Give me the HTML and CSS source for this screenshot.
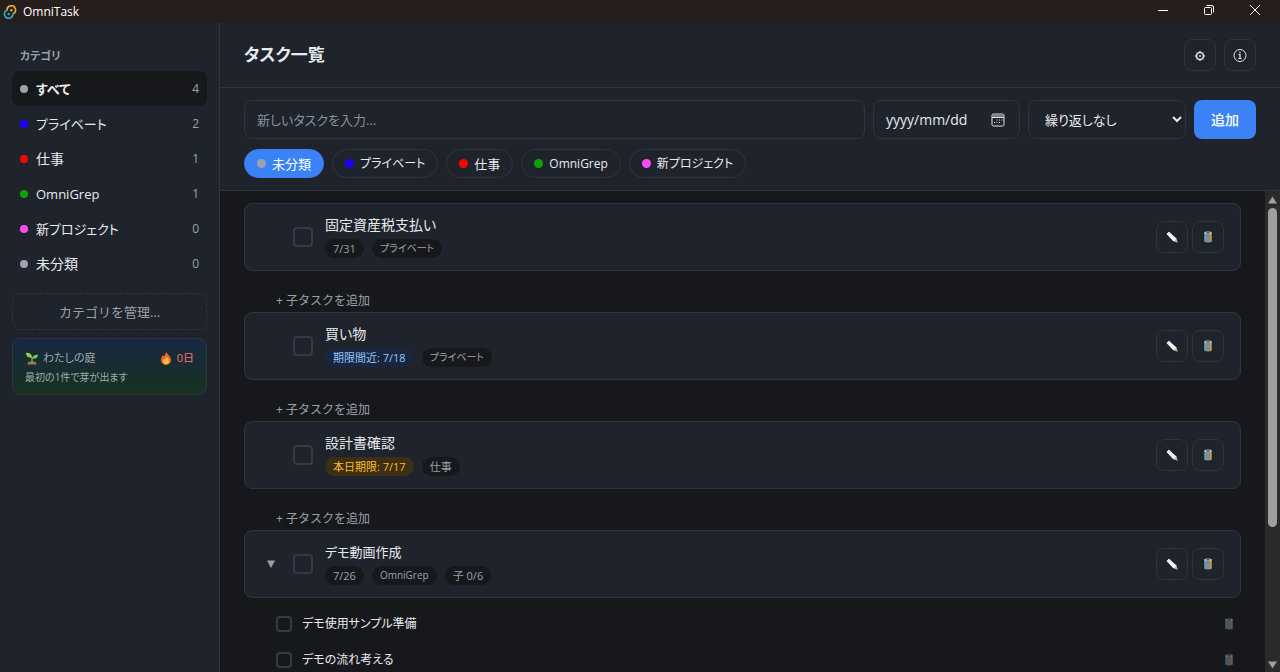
FILE: index.html
```html
<!DOCTYPE html>
<html lang="ja">

<head>
    <meta charset="UTF-8">
    <meta name="viewport" content="width=device-width, initial-scale=1.0">
    <title>OmniTask</title>
    <link rel="stylesheet" href="styles.css">
</head>

<body>
    <!-- shared icons -->
    <svg class="sprite" aria-hidden="true">
        <symbol id="pencil" viewBox="0 0 12 12">
            <path d="M.6 3 3 .8l7.200 6.400 1.400 4.200-4.600-1.300z" fill="#f1f1f3" />
            <path d="M.6 3 3 .8l1.300 1.200-2.300 2.300z" fill="#d9e9f7" />
            <path d="M9.900 8.300l1.700 3.100-3.400-1z" fill="#d9a577" />
        </symbol>
        <symbol id="trash" viewBox="0 0 12 12">
            <path d="M2.500 1.500h7v9.200q-3.500 1.400-7 0z" fill="#9d97a6" />
            <path d="M2.500 2h1.500v9l-1.500-.4z" fill="#3fb3b5" />
            <path d="M8 2h1.500v8.600L8 11z" fill="#b3ad2e" />
            <path d="M5 3v8M7 3v8" stroke="#77717f" stroke-width=".8" />
            <ellipse cx="6" cy="1.700" rx="3.700" ry="1.300" fill="#c9c9cd" />
            <ellipse cx="6" cy="1.800" rx="2.200" ry=".6" fill="#2b2d33" />
        </symbol>
    </svg>

    <div class="titleBar">
        <svg class="logo" viewBox="0 0 14 14" fill="none" stroke-width="1.600">
            <path d="M4.200 5.600A4.200 4.200 0 1 1 10.200 8.700" stroke="#e6ac35" />
            <path d="M9.800 8.500A4.200 4.200 0 1 1 3.800 5.300" stroke="#26b3c4" />
            <circle cx="8.300" cy="5.200" r="1.200" fill="#e6ac35" />
            <circle cx="5.700" cy="9" r="1.200" fill="#26b3c4" />
        </svg>
        <span>OmniTask</span>
        <div class="windowButtons">
            <button aria-label="最小化"><svg viewBox="0 0 12 12"><path d="M1 6.500h10" /></svg></button>
            <button aria-label="元に戻す"><svg viewBox="0 0 12 12"><rect x="1.500" y="3.500" width="7" height="7" rx="1" /><path d="M3.500 1.500H9a1.500 1.500 0 0 1 1.500 1.500v5.500" /></svg></button>
            <button aria-label="閉じる"><svg viewBox="0 0 12 12"><path d="M1 1l10 10M11 1L1 11" /></svg></button>
        </div>
    </div>

    <div class="app">
        <aside class="sidebar">
            <h2>カテゴリ</h2>
            <ul class="categories">
                <li class="active kana"><i class="dot gray"></i>すべて<span class="count">4</span></li>
                <li class="kana"><i class="dot blue"></i>プライベート<span class="count">2</span></li>
                <li><i class="dot red"></i>仕事<span class="count">1</span></li>
                <li class="latin"><i class="dot green"></i>OmniGrep<span class="count">1</span></li>
                <li class="kana"><i class="dot pink"></i>新プロジェクト<span class="count">0</span></li>
                <li><i class="dot gray"></i>未分類<span class="count">0</span></li>
            </ul>
            <button class="manage">カテゴリを管理...</button>
            <div class="garden">
                <div class="gardenTop">
                    <svg viewBox="0 0 14 14">
                        <path d="M2 13.500q0-3.500 5-3.500t5 3.500z" fill="#a8705f" />
                        <path d="M6.200 11V5h1.600v6z" fill="#6aa53a" />
                        <path d="M7 6.200Q1.500 6.800.2 1 6.500.2 7 6.200z" fill="#93cf4a" />
                        <path d="M7 7Q8 2.300 13.800 3 12.500 8.300 7 7z" fill="#7cc447" />
                    </svg>
                    <span>わたしの庭</span>
                    <svg class="flame" viewBox="0 0 14 14">
                        <path d="M7.500.3C8 2.500 12.500 4.500 12.500 8.700A5.500 5.200 0 0 1 1.500 8.700C1.500 6.500 3 5.500 3.400 3.500L5 4.500Q6 2.500 7.500.3z" fill="#f0642f" />
                        <path d="M7.500 5Q10.800 7.500 10.300 10A3.300 3.300 0 0 1 3.700 10Q3.700 8.500 5.400 7.200L6 8.500z" fill="#fbbf3c" />
                    </svg>
                    <span class="streak">0日</span>
                </div>
                <p>最初の1件で芽が出ます</p>
            </div>
        </aside>

        <main class="content">
            <header class="header">
                <h1>タスク一覧</h1>
                <button class="iconButton" aria-label="設定">
                    <svg viewBox="0 0 14 14" fill="none" stroke="#e4e6eb">
                        <circle cx="7" cy="8" r="3.500" stroke-width="1.600" />
                        <circle cx="7" cy="8" r="1" fill="#e4e6eb" stroke="none" />
                        <path d="M7 2.800v2M7 11.200v2M1.800 8h2M10.200 8h2M3.500 4.500l1.200 1.200M9.300 10.300l1.200 1.200M10.500 4.500L9.300 5.700M4.700 10.300l-1.200 1.200" />
                    </svg>
                </button>
                <button class="iconButton" aria-label="情報">
                    <svg viewBox="0 0 14 14" fill="none" stroke="#e4e6eb">
                        <circle cx="7" cy="7.500" r="6" />
                        <path d="M7 3.700v1.500M5.500 6.500H7V10.500M5.400 10.500h3.200" stroke-width="1.200" />
                    </svg>
                </button>
            </header>

            <form class="addForm">
                <div class="formRow">
                    <input type="text" class="taskInput" placeholder="新しいタスクを入力..." aria-label="新しいタスク">
                    <label class="dateField">
                        <input type="text" placeholder="yyyy/mm/dd" aria-label="期限">
                        <svg viewBox="0 0 14 14" fill="none" stroke="#e4e6eb">
                            <rect x="1" y="1" width="12" height="12" rx="1.500" />
                            <path d="M1 4.500h12M5.500 7h1M8 7h1M10.500 7h1M3 9.500h1M5.500 9.500h1M8 9.500h1" />
                            <path d="M1 2.800h12" stroke="#858992" stroke-width="2" />
                        </svg>
                    </label>
                    <select aria-label="繰り返し">
                        <option>繰り返しなし</option>
                        <option>毎日</option>
                        <option>毎週</option>
                        <option>毎月</option>
                    </select>
                    <button type="button" class="addButton">追加</button>
                </div>
                <div class="chips">
                    <button type="button" class="chip selected"><i class="dot gray"></i>未分類</button>
                    <button type="button" class="chip kana"><i class="dot blue"></i>プライベート</button>
                    <button type="button" class="chip"><i class="dot red"></i>仕事</button>
                    <button type="button" class="chip latin"><i class="dot green"></i>OmniGrep</button>
                    <button type="button" class="chip kana"><i class="dot pink"></i>新プロジェクト</button>
                </div>
            </form>

            <div class="listArea">
                <div class="taskList">
                    <div class="task">
                        <span class="toggle"></span>
                        <input type="checkbox" aria-label="固定資産税支払い">
                        <div class="taskBody">
                            <div class="taskTitle">固定資産税支払い</div>
                            <div class="badges"><span class="badge">7/31</span><span class="badge kana">プライベート</span></div>
                        </div>
                        <div class="actions">
                            <button class="iconButton" aria-label="編集"><svg><use href="#pencil" /></svg></button>
                            <button class="iconButton" aria-label="削除"><svg><use href="#trash" /></svg></button>
                        </div>
                    </div>
                    <button class="addChild">+ 子タスクを追加</button>

                    <div class="task">
                        <span class="toggle"></span>
                        <input type="checkbox" aria-label="買い物">
                        <div class="taskBody">
                            <div class="taskTitle">買い物</div>
                            <div class="badges"><span class="badge soon">期限間近: 7/18</span><span class="badge kana">プライベート</span></div>
                        </div>
                        <div class="actions">
                            <button class="iconButton" aria-label="編集"><svg><use href="#pencil" /></svg></button>
                            <button class="iconButton" aria-label="削除"><svg><use href="#trash" /></svg></button>
                        </div>
                    </div>
                    <button class="addChild">+ 子タスクを追加</button>

                    <div class="task">
                        <span class="toggle"></span>
                        <input type="checkbox" aria-label="設計書確認">
                        <div class="taskBody">
                            <div class="taskTitle">設計書確認</div>
                            <div class="badges"><span class="badge today">本日期限: 7/17</span><span class="badge">仕事</span></div>
                        </div>
                        <div class="actions">
                            <button class="iconButton" aria-label="編集"><svg><use href="#pencil" /></svg></button>
                            <button class="iconButton" aria-label="削除"><svg><use href="#trash" /></svg></button>
                        </div>
                    </div>
                    <button class="addChild">+ 子タスクを追加</button>

                    <div class="task">
                        <button class="toggle" aria-label="折りたたむ"><svg viewBox="0 0 8 8"><path d="M0 .5h8L4 8z" fill="#9aa0aa" /></svg></button>
                        <input type="checkbox" aria-label="デモ動画作成">
                        <div class="taskBody">
                            <div class="taskTitle kana">デモ動画作成</div>
                            <div class="badges"><span class="badge">7/26</span><span class="badge latin">OmniGrep</span><span class="badge">子 0/6</span></div>
                        </div>
                        <div class="actions">
                            <button class="iconButton" aria-label="編集"><svg><use href="#pencil" /></svg></button>
                            <button class="iconButton" aria-label="削除"><svg><use href="#trash" /></svg></button>
                        </div>
                    </div>
                    <div class="subtasks">
                        <div class="subtask">
                            <label><input type="checkbox">デモ使用サンプル準備</label>
                            <button aria-label="削除"><svg><use href="#trash" /></svg></button>
                        </div>
                        <div class="subtask">
                            <label><input type="checkbox">デモの流れ考える</label>
                            <button aria-label="削除"><svg><use href="#trash" /></svg></button>
                        </div>
                    </div>
                </div>
                <div class="scrollbar" aria-hidden="true">
                    <svg viewBox="0 0 9 8"><path d="M4.500.5 9 7.500H0z" /></svg>
                    <div class="track"><div class="thumb"></div></div>
                    <svg viewBox="0 0 9 8"><path d="M4.500 7.500 9 .5H0z" /></svg>
                </div>
            </div>
        </main>
    </div>
</body>

</html>
```

FILE: styles.css
```css
:root {
    --bg: #17181c;
    --panel: #1f242c;
    --border: #2e3440;
    --text: #e8eaed;
    --muted: #9aa0aa;
    --accent: #3b82f6;
    color-scheme: dark;
}

* {
    box-sizing: border-box;
}

body {
    margin: 0;
    height: 100vh;
    display: flex;
    flex-direction: column;
    overflow: hidden;
    background: var(--bg);
    color: var(--text);
    font-family: "Open Sans", "Noto Sans CJK JP", sans-serif;
    font-size: 14px;
    line-height: 20px;
    font-feature-settings: "palt";
}

h1,
h2,
p,
ul {
    margin: 0;
    padding: 0;
}

button,
input,
select {
    font: inherit;
    color: inherit;
    font-feature-settings: inherit;
}

button {
    padding: 0;
    border: none;
    background: none;
    cursor: pointer;
}

svg {
    display: block;
    flex-shrink: 0;
}

.sprite {
    display: none;
}

/* window title bar */
.titleBar {
    flex-shrink: 0;
    display: flex;
    align-items: center;
    gap: 6px;
    height: 23px;
    padding: 0 2px 0 3px;
    background: #261e1c;
    color: #fff;
    font-size: 12px;
}

.logo {
    width: 14px;
    height: 14px;
}

.windowButtons {
    display: flex;
    align-self: flex-start;
    margin-left: auto;
}

.windowButtons button {
    display: flex;
    align-items: center;
    justify-content: center;
    width: 46px;
    height: 20px;
}

.windowButtons svg {
    width: 12px;
    height: 12px;
    fill: none;
    stroke: #fff;
}

.app {
    flex: 1;
    display: flex;
    min-height: 0;
}

/* sidebar */
.sidebar {
    flex-shrink: 0;
    width: 220px;
    padding: 23px 12px;
    background: var(--panel);
    border-right: 1px solid var(--border);
}

.sidebar h2 {
    padding: 0 8px 5px;
    color: var(--muted);
    font-size: 11px;
    font-weight: 600;
}

.categories {
    list-style: none;
}

.categories li {
    display: flex;
    align-items: center;
    gap: 8px;
    height: 35px;
    padding: 0 8px;
    border-radius: 8px;
}

.categories .kana,
.categories .latin {
    font-size: 13px;
}

.categories .active {
    background: var(--bg);
    font-weight: 600;
}

.count {
    margin-left: auto;
    color: var(--muted);
    font-size: 12px;
    font-weight: 400;
}

.dot {
    flex-shrink: 0;
    width: 8px;
    height: 8px;
    border-radius: 50%;
}

.gray {
    background: #9ca3af;
}

.blue {
    background: #1a00ff;
}

.red {
    background: #ff0000;
}

.green {
    background: #11a000;
}

.pink {
    background: #ff4df3;
}

.manage {
    width: 100%;
    height: 37px;
    margin: 12px 0 8px;
    border: 1px dashed var(--border);
    border-radius: 8px;
    color: var(--muted);
    font-size: 13px;
    font-feature-settings: normal;
}

.garden {
    padding: 9px 12px 7px;
    border: 1px solid var(--border);
    border-radius: 8px;
    background: linear-gradient(#172741, #17331f);
    color: #a3a9b3;
    font-size: 11px;
}

.gardenTop {
    display: flex;
    align-items: center;
    gap: 4px;
}

.gardenTop svg {
    width: 14px;
    height: 13px;
}

.gardenTop .flame {
    margin-left: auto;
}

.streak {
    color: #f87171;
}

.garden p {
    font-size: 10px;
    line-height: 19px;
}

/* main column */
.content {
    flex: 1;
    display: flex;
    flex-direction: column;
    min-width: 0;
}

.header {
    display: flex;
    align-items: center;
    gap: 8px;
    padding: 16px 24px;
    background: var(--panel);
    border-bottom: 1px solid var(--border);
}

.header h1 {
    margin-right: auto;
    font-size: 17px;
    font-weight: 600;
}

.iconButton {
    display: flex;
    align-items: center;
    justify-content: center;
    width: 32px;
    height: 32px;
    border: 1px solid var(--border);
    border-radius: 8px;
}

.header svg {
    width: 14px;
    height: 14px;
}

.addForm {
    display: flex;
    flex-direction: column;
    gap: 10px;
    padding: 12px 24px;
    background: var(--panel);
    border-bottom: 1px solid var(--border);
}

.formRow {
    display: flex;
    gap: 8px;
    height: 39px;
}

.taskInput,
.dateField,
.formRow select {
    padding: 0 12px;
    border: 1px solid var(--border);
    border-radius: 8px;
    background: var(--panel);
    font-size: 13px;
}

.taskInput {
    flex: 1;
    min-width: 0;
}

.taskInput::placeholder {
    color: #8b919b;
}

.dateField {
    display: flex;
    align-items: center;
    justify-content: space-between;
    width: 147px;
    padding-right: 14px;
    font-size: 14px;
}

.dateField input {
    width: 92px;
    padding: 0;
    border: none;
    background: none;
}

.dateField input::placeholder {
    color: var(--text);
}

.dateField svg {
    width: 14px;
    height: 14px;
}

.formRow select {
    width: 158px;
    padding-right: 0;
}

.addButton {
    width: 62px;
    border-radius: 8px;
    background: var(--accent);
    color: #fff;
    font-weight: 500;
}

.chips {
    display: flex;
    gap: 8px;
}

.chip {
    display: flex;
    align-items: center;
    gap: 6px;
    height: 29px;
    padding: 0 12px;
    border: 1px solid var(--border);
    border-radius: 15px;
    font-size: 13px;
}

.chip.kana,
.chip.latin {
    font-size: 12px;
}

.chip .dot {
    width: 9px;
    height: 9px;
}

.chip.selected {
    background: var(--accent);
    border-color: var(--accent);
    color: #fff;
}

/* task list */
.listArea {
    flex: 1;
    display: flex;
    min-height: 0;
}

.taskList {
    flex: 1;
    padding: 12px 24px;
    overflow-y: auto;
    scrollbar-width: none;
}

.task {
    display: flex;
    align-items: center;
    gap: 12px;
    padding: 12px 16px;
    background: var(--panel);
    border: 1px solid var(--border);
    border-radius: 8px;
}

.toggle {
    display: flex;
    justify-content: center;
    width: 20px;
}

.toggle svg {
    width: 8px;
    height: 8px;
}

input[type=checkbox] {
    appearance: none;
    flex-shrink: 0;
    width: 20px;
    height: 20px;
    margin: 0;
    border: 2px solid #343a46;
    border-radius: 4px;
}

.taskBody {
    flex: 1;
    display: flex;
    flex-direction: column;
    gap: 5px;
}

.taskTitle {
    line-height: 18px;
}

.taskTitle.kana {
    font-size: 13px;
}

.badges {
    display: flex;
    gap: 8px;
}

.badge {
    padding: 0 8px;
    border-radius: 10px;
    background: var(--bg);
    color: var(--muted);
    font-size: 11px;
    line-height: 19px;
}

.badge.kana,
.badge.latin {
    font-size: 10px;
}

.badge.soon {
    background: #182640;
    color: #93c5fd;
}

.badge.today {
    background: #3d2e16;
    color: #fbbf24;
}

.actions {
    display: flex;
    gap: 4px;
}

.actions svg,
.subtask svg {
    width: 12px;
    height: 12px;
}

.addChild {
    display: block;
    margin: 20px 0 1px 32px;
    color: var(--muted);
    font-size: 12px;
    font-feature-settings: normal;
}

.subtasks {
    padding: 8px 0 0 32px;
}

.subtask {
    display: flex;
    align-items: center;
    justify-content: space-between;
    height: 36px;
    padding-right: 6px;
    font-size: 12px;
}

.subtask label {
    display: flex;
    align-items: center;
    gap: 10px;
}

.subtask input {
    width: 16px;
    height: 16px;
}

.subtask button {
    opacity: .5;
}

.scrollbar {
    display: flex;
    flex-direction: column;
    align-items: center;
    gap: 4px;
    width: 15px;
    padding: 5px 0 3px;
    background: #2b2b2b;
}

.scrollbar svg {
    width: 9px;
    height: 8px;
    fill: #9f9f9f;
}

.track {
    flex: 1;
}

.thumb {
    width: 9px;
    height: 71%;
    border-radius: 5px;
    background: #9f9f9f;
}
```
